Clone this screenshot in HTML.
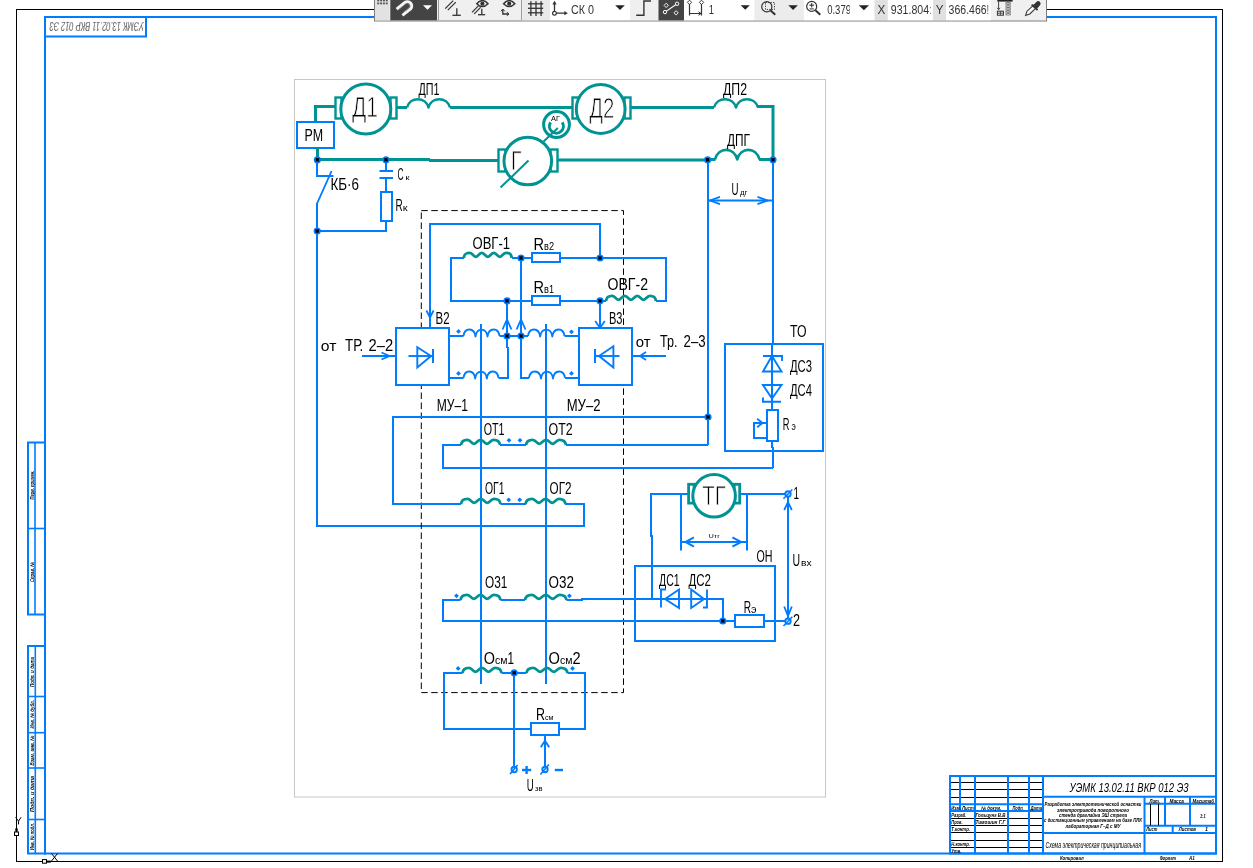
<!DOCTYPE html>
<html><head><meta charset="utf-8"><title>drawing</title>
<style>
html,body{margin:0;padding:0;background:#fff;}
body{width:1253px;height:868px;overflow:hidden;font-family:"Liberation Sans",sans-serif;}
svg{display:block;font-family:"Liberation Sans",sans-serif;will-change:transform;}
</style></head><body>
<svg width="1253" height="868" viewBox="0 0 1253 868">
<rect x="0" y="0" width="1253" height="868" fill="#fff"/>
<rect x="16.5" y="9.5" width="1206" height="852" fill="none" stroke="#000" stroke-width="1" />
<rect x="45" y="17" width="1171" height="836.5" fill="none" stroke="#007cff" stroke-width="2" />
<rect x="294.5" y="79.5" width="531" height="717.5" fill="none" stroke="#c8c8c8" stroke-width="1" />
<line x1="314" y1="106.5" x2="336" y2="106.5" stroke="#009393" stroke-width="3" />
<line x1="315.5" y1="105" x2="315.5" y2="122" stroke="#009393" stroke-width="3" />
<rect x="335.5" y="97.5" width="6" height="21" fill="none" stroke="#009393" stroke-width="2.4" />
<rect x="390.5" y="97.5" width="6" height="21" fill="none" stroke="#009393" stroke-width="2.4" />
<circle cx="365.8" cy="109" r="25" fill="#fff" stroke="#009393" stroke-width="3"/>
<text x="352" y="117.3" font-size="29.5" fill="#000" textLength="26" lengthAdjust="spacingAndGlyphs"    stroke="#fff" stroke-width="0.89">Д1</text>
<rect x="297" y="122" width="37" height="26" fill="#fff" stroke="#007cff" stroke-width="2" />
<text x="304.5" y="141.2" font-size="16" fill="#000" textLength="18.5" lengthAdjust="spacingAndGlyphs"    >РМ</text>
<line x1="317.5" y1="148" x2="317.5" y2="160" stroke="#009393" stroke-width="3" />
<line x1="397" y1="107.5" x2="407" y2="107.5" stroke="#009393" stroke-width="3" />
<path d="M407 107.5 C410.01 96.59 425.49 96.59 428.5 107.5 C431.51 96.59 446.99 96.59 450.0 107.5" fill="none" stroke="#009393" stroke-width="2.6" stroke-linejoin="round"/>
<line x1="450" y1="107.5" x2="572" y2="107.5" stroke="#009393" stroke-width="3" />
<text x="418.5" y="95" font-size="16" fill="#000" textLength="21.0" lengthAdjust="spacingAndGlyphs"    >ДП1</text>
<rect x="572.5" y="97.5" width="6" height="21" fill="none" stroke="#009393" stroke-width="2.4" />
<rect x="624.5" y="97.5" width="6" height="21" fill="none" stroke="#009393" stroke-width="2.4" />
<circle cx="600.7" cy="109" r="24.4" fill="#fff" stroke="#009393" stroke-width="3"/>
<text x="589.2" y="117.6" font-size="29.5" fill="#000" textLength="25.1" lengthAdjust="spacingAndGlyphs"    stroke="#fff" stroke-width="0.89">Д2</text>
<line x1="631" y1="107.5" x2="714" y2="107.5" stroke="#009393" stroke-width="3" />
<path d="M714 107.5 C717.08 96.59 732.92 96.59 736.0 107.5 C739.08 96.59 754.92 96.59 758.0 107.5" fill="none" stroke="#009393" stroke-width="2.6" stroke-linejoin="round"/>
<polyline points="757,106.5 773,106.5 773,160" fill="none" stroke="#009393" stroke-width="3" />
<text x="723" y="95" font-size="16" fill="#000" textLength="24" lengthAdjust="spacingAndGlyphs"    >ДП2</text>
<line x1="316" y1="159.5" x2="430" y2="159.5" stroke="#009393" stroke-width="3" />
<line x1="429" y1="160.5" x2="498" y2="160.5" stroke="#009393" stroke-width="3" />
<line x1="558" y1="160" x2="708" y2="160" stroke="#009393" stroke-width="3" />
<line x1="707" y1="159.5" x2="715.5" y2="159.5" stroke="#009393" stroke-width="3" />
<path d="M715 159.5 C718.12 146.73 734.13 146.73 737.25 159.5 C740.37 146.73 756.38 146.73 759.5 159.5" fill="none" stroke="#009393" stroke-width="2.6" stroke-linejoin="round"/>
<line x1="759" y1="159.5" x2="774" y2="159.5" stroke="#009393" stroke-width="3" />
<text x="727" y="146" font-size="16" fill="#000" textLength="23" lengthAdjust="spacingAndGlyphs"    >ДПГ</text>
<rect x="498.5" y="149.5" width="7" height="22" fill="none" stroke="#009393" stroke-width="2.4" />
<rect x="550.5" y="149.5" width="7" height="22" fill="none" stroke="#009393" stroke-width="2.4" />
<circle cx="527.8" cy="161" r="23.8" fill="#fff" stroke="#009393" stroke-width="3"/>
<line x1="500.5" y1="187.5" x2="528.5" y2="160.5" stroke="#009393" stroke-width="2" />
<text x="511" y="169.8" font-size="27" fill="#000" textLength="10.5" lengthAdjust="spacingAndGlyphs"    stroke="#fff" stroke-width="0.81">Г</text>
<circle cx="556.5" cy="124.5" r="12.9" fill="#fff" stroke="#009393" stroke-width="3"/>
<path d="M550.6 122.3 A7 7 0 1 0 562.2 122.3" fill="none" stroke="#009393" stroke-width="3" />
<line x1="543.6" y1="141.4" x2="557.8" y2="128.1" stroke="#009393" stroke-width="2" />
<text x="551" y="120.7" font-size="8" fill="#000" textLength="9" lengthAdjust="spacingAndGlyphs"    >АГ</text>
<polyline points="317,160 317,176 333.5,176" fill="none" stroke="#007cff" stroke-width="2" />
<line x1="331.6" y1="171" x2="317" y2="203.6" stroke="#007cff" stroke-width="1.8" />
<polyline points="317,203 317,526 584,526 584,504 565,504" fill="none" stroke="#007cff" stroke-width="2" />
<text x="330.5" y="190" font-size="16" fill="#000" textLength="28.5" lengthAdjust="spacingAndGlyphs"    >КБ·6</text>
<line x1="386" y1="160" x2="386" y2="171" stroke="#007cff" stroke-width="2" />
<line x1="379.5" y1="171" x2="393" y2="171" stroke="#007cff" stroke-width="2" />
<line x1="379.5" y1="178" x2="393" y2="178" stroke="#007cff" stroke-width="2" />
<line x1="386" y1="178" x2="386" y2="192" stroke="#007cff" stroke-width="2" />
<rect x="381" y="192" width="11" height="29" fill="#fff" stroke="#007cff" stroke-width="2" />
<polyline points="386,221 386,231 317,231" fill="none" stroke="#007cff" stroke-width="2" />
<text x="397.5" y="179.8" font-size="16" fill="#000" textLength="6.1" lengthAdjust="spacingAndGlyphs"    >С</text>
<text x="405.5" y="180" font-size="7" fill="#000" textLength="4.0" lengthAdjust="spacingAndGlyphs"    >к</text>
<text x="395.6" y="211.2" font-size="16" fill="#000" textLength="7.2" lengthAdjust="spacingAndGlyphs"    >R</text>
<text x="402.8" y="211.2" font-size="9.5" fill="#000" textLength="4.8" lengthAdjust="spacingAndGlyphs"    >к</text>
<line x1="708" y1="160" x2="708" y2="445" stroke="#007cff" stroke-width="2" />
<line x1="773" y1="160" x2="773" y2="345" stroke="#007cff" stroke-width="2" />
<line x1="772" y1="344" x2="772" y2="448" stroke="#007cff" stroke-width="2" />
<line x1="773" y1="447" x2="773" y2="468" stroke="#007cff" stroke-width="2" />
<line x1="708" y1="200.5" x2="773" y2="200.5" stroke="#007cff" stroke-width="2" />
<polyline points="720.0,196.9 710,200.5 720.0,204.1" fill="none" stroke="#007cff" stroke-width="1.8" />
<polyline points="757.5,204.1 767.5,200.5 757.5,196.9" fill="none" stroke="#007cff" stroke-width="1.8" />
<text x="731.5" y="194.7" font-size="16" fill="#000" textLength="7.0" lengthAdjust="spacingAndGlyphs"    >U</text>
<text x="740" y="194.7" font-size="7" fill="#000" textLength="7.5" lengthAdjust="spacingAndGlyphs"    >дг</text>
<rect x="421.3" y="210.6" width="202.2" height="482" fill="none" stroke="#000" stroke-width="1" stroke-dasharray="6.5 3.5"/>
<polyline points="430,328 430,224 600,224 600,258" fill="none" stroke="#007cff" stroke-width="2" />
<polyline points="426.4,310.5 430,317.5 433.6,310.5" fill="none" stroke="#007cff" stroke-width="1.8" />
<polyline points="464,258 451,258 451,301 532,301" fill="none" stroke="#007cff" stroke-width="2" />
<path d="M463.8 258 C464.28 253.58 466.5 252.8 469.8 252.8 C472.8 252.8 473.1 256.8 475.8 256.8 C478.5 256.8 478.8 252.8 481.8 252.8 C484.8 252.8 485.1 256.8 487.8 256.8 C490.5 256.8 490.8 252.8 493.8 252.8 C496.8 252.8 497.1 256.8 499.8 256.8 C502.5 256.8 502.8 252.8 505.8 252.8 C509.1 252.8 511.32 253.58 511.8 258" fill="none" stroke="#009393" stroke-width="2.8" stroke-linejoin="round"/>
<line x1="512" y1="258" x2="532" y2="258" stroke="#007cff" stroke-width="2" />
<rect x="532" y="253" width="28" height="9" fill="#fff" stroke="#007cff" stroke-width="2" />
<polyline points="560,258 666,258 666,301 656,301" fill="none" stroke="#007cff" stroke-width="2" />
<text x="472.5" y="248.7" font-size="16" fill="#000" textLength="37.5" lengthAdjust="spacingAndGlyphs"    >ОВГ-1</text>
<text x="533.5" y="249.6" font-size="16" fill="#000" textLength="10.5" lengthAdjust="spacingAndGlyphs"    >R</text>
<text x="544" y="249.6" font-size="10" fill="#000" textLength="10" lengthAdjust="spacingAndGlyphs"    >в2</text>
<rect x="532" y="296" width="28" height="9" fill="#fff" stroke="#007cff" stroke-width="2" />
<line x1="560" y1="301" x2="606" y2="301" stroke="#007cff" stroke-width="2" />
<path d="M606 301 C606.5 296.58 608.81 295.8 612.25 295.8 C615.38 295.8 615.69 299.8 618.5 299.8 C621.31 299.8 621.62 295.8 624.75 295.8 C627.88 295.8 628.19 299.8 631.0 299.8 C633.81 299.8 634.12 295.8 637.25 295.8 C640.38 295.8 640.69 299.8 643.5 299.8 C646.31 299.8 646.62 295.8 649.75 295.8 C653.19 295.8 655.5 296.58 656 301" fill="none" stroke="#009393" stroke-width="2.8" stroke-linejoin="round"/>
<text x="533.5" y="292.7" font-size="16" fill="#000" textLength="10.5" lengthAdjust="spacingAndGlyphs"    >R</text>
<text x="544" y="292.7" font-size="10" fill="#000" textLength="10" lengthAdjust="spacingAndGlyphs"    >в1</text>
<text x="607.5" y="290" font-size="16" fill="#000" textLength="40.5" lengthAdjust="spacingAndGlyphs"    >ОВГ-2</text>
<line x1="507" y1="301" x2="507" y2="348" stroke="#007cff" stroke-width="2" />
<line x1="508" y1="347" x2="508" y2="378" stroke="#007cff" stroke-width="2" />
<line x1="521" y1="258" x2="521" y2="378" stroke="#007cff" stroke-width="2" />
<polyline points="511.5,329.5 507,319.5 502.5,329.5" fill="none" stroke="#007cff" stroke-width="1.8" />
<polyline points="525.5,329.5 521,319.5 516.5,329.5" fill="none" stroke="#007cff" stroke-width="1.8" />
<line x1="600" y1="301" x2="600" y2="328" stroke="#007cff" stroke-width="2" />
<polyline points="595.2,321.0 600,328 604.8,321.0" fill="none" stroke="#007cff" stroke-width="1.8" />
<rect x="396" y="328" width="53" height="57" fill="#fff" stroke="#007cff" stroke-width="2" />
<text x="435.5" y="323.6" font-size="16" fill="#000" textLength="14.0" lengthAdjust="spacingAndGlyphs"    >В2</text>
<text x="320.8" y="351.2" font-size="14.5" fill="#000" textLength="15.6" lengthAdjust="spacingAndGlyphs"    >от</text>
<text x="345" y="351.2" font-size="16" fill="#000" textLength="18.2" lengthAdjust="spacingAndGlyphs"    >ТР.</text>
<text x="368.6" y="351.2" font-size="16" fill="#000" textLength="24.6" lengthAdjust="spacingAndGlyphs"    >2–2</text>
<line x1="362" y1="356" x2="397" y2="356" stroke="#007cff" stroke-width="2" />
<polyline points="381.5,359.5 389.5,356 381.5,352.5" fill="none" stroke="#007cff" stroke-width="1.8" />
<line x1="408.5" y1="356" x2="433.5" y2="356" stroke="#007cff" stroke-width="1.9" />
<path d="M417.3 347.3 L417.3 367.5 L431 356 Z" fill="none" stroke="#007cff" stroke-width="1.9" />
<line x1="433" y1="349" x2="433" y2="363" stroke="#007cff" stroke-width="2" />
<rect x="579" y="328" width="53" height="57" fill="#fff" stroke="#007cff" stroke-width="2" />
<text x="609" y="323.6" font-size="16" fill="#000" textLength="13.5" lengthAdjust="spacingAndGlyphs"    >В3</text>
<text x="635.8" y="346.8" font-size="14.5" fill="#000" textLength="14.8" lengthAdjust="spacingAndGlyphs"    >от</text>
<text x="660" y="346.8" font-size="16" fill="#000" textLength="17.5" lengthAdjust="spacingAndGlyphs"    >Тр.</text>
<text x="683.6" y="346.8" font-size="16" fill="#000" textLength="22.0" lengthAdjust="spacingAndGlyphs"    >2–3</text>
<line x1="632" y1="356" x2="666" y2="356" stroke="#007cff" stroke-width="2" />
<polyline points="646,352 640,356 646,360" fill="none" stroke="#007cff" stroke-width="1.8" />
<line x1="595" y1="356" x2="619.5" y2="356" stroke="#007cff" stroke-width="1.9" />
<path d="M613.4 346.3 L613.4 367.5 L599 356 Z" fill="none" stroke="#007cff" stroke-width="1.9" />
<line x1="595" y1="349" x2="595" y2="363" stroke="#007cff" stroke-width="2" />
<line x1="449" y1="336" x2="463.5" y2="336" stroke="#007cff" stroke-width="2" />
<path d="M463.5 336 C464.7 327.22 474.3 327.22 475.5 336.6 C476.7 327.22 486.3 327.22 487.5 336.6 C488.7 327.22 498.3 327.22 499.5 336" fill="none" stroke="#007cff" stroke-width="1.8" stroke-linejoin="round"/>
<line x1="499.5" y1="336" x2="528" y2="336" stroke="#007cff" stroke-width="2" />
<path d="M528 336 C529.22 327.22 538.95 327.22 540.17 336.6 C541.38 327.22 551.12 327.22 552.33 336.6 C553.55 327.22 563.28 327.22 564.5 336" fill="none" stroke="#007cff" stroke-width="1.8" stroke-linejoin="round"/>
<line x1="564.5" y1="336" x2="579" y2="336" stroke="#007cff" stroke-width="2" />
<rect x="456.8" y="329.7" width="3.4" height="3.4" fill="#007cff" transform="rotate(45 458.5 331.4)"/>
<rect x="569.8" y="330.1" width="3.4" height="3.4" fill="#007cff" transform="rotate(45 571.5 331.8)"/>
<line x1="449" y1="378" x2="463.5" y2="378" stroke="#007cff" stroke-width="2" />
<path d="M463.5 378 C464.67 369.22 474.0 369.22 475.17 378.6 C476.33 369.22 485.67 369.22 486.83 378.6 C488.0 369.22 497.33 369.22 498.5 378" fill="none" stroke="#007cff" stroke-width="1.8" stroke-linejoin="round"/>
<line x1="498.5" y1="378" x2="509" y2="378" stroke="#007cff" stroke-width="2" />
<line x1="520" y1="378" x2="529" y2="378" stroke="#007cff" stroke-width="2" />
<path d="M529 378 C530.2 369.22 539.8 369.22 541.0 378.6 C542.2 369.22 551.8 369.22 553.0 378.6 C554.2 369.22 563.8 369.22 565.0 378" fill="none" stroke="#007cff" stroke-width="1.8" stroke-linejoin="round"/>
<line x1="565" y1="378" x2="579" y2="378" stroke="#007cff" stroke-width="2" />
<rect x="456.8" y="371.7" width="3.4" height="3.4" fill="#007cff" transform="rotate(45 458.5 373.4)"/>
<rect x="569.8" y="371.7" width="3.4" height="3.4" fill="#007cff" transform="rotate(45 571.5 373.4)"/>
<line x1="481" y1="324" x2="481" y2="684" stroke="#007cff" stroke-width="2" />
<line x1="546" y1="324" x2="546" y2="684" stroke="#007cff" stroke-width="2" />
<text x="436.8" y="410.8" font-size="16" fill="#000" textLength="31.2" lengthAdjust="spacingAndGlyphs"    >МУ–1</text>
<text x="566.7" y="411" font-size="16" fill="#000" textLength="33.8" lengthAdjust="spacingAndGlyphs"    >МУ–2</text>
<polyline points="708,417 393,417 393,504 461,504" fill="none" stroke="#007cff" stroke-width="2" />
<polyline points="461,445 443,445 443,468 773,468" fill="none" stroke="#007cff" stroke-width="2" />
<path d="M461 445 C461.52 440.58 463.93 439.8 467.5 439.8 C470.75 439.8 471.07 443.8 474.0 443.8 C476.93 443.8 477.25 439.8 480.5 439.8 C483.75 439.8 484.07 443.8 487.0 443.8 C489.93 443.8 490.25 439.8 493.5 439.8 C497.07 439.8 499.48 440.58 500 445" fill="none" stroke="#009393" stroke-width="2.8" stroke-linejoin="round"/>
<line x1="500" y1="445" x2="526" y2="445" stroke="#007cff" stroke-width="2" />
<path d="M526 445 C526.53 440.58 529.0 439.8 532.67 439.8 C536.0 439.8 536.33 443.8 539.33 443.8 C542.33 443.8 542.67 439.8 546.0 439.8 C549.33 439.8 549.67 443.8 552.67 443.8 C555.67 443.8 556.0 439.8 559.33 439.8 C563.0 439.8 565.47 440.58 566 445" fill="none" stroke="#009393" stroke-width="2.8" stroke-linejoin="round"/>
<polyline points="566,445 708,445" fill="none" stroke="#007cff" stroke-width="2" />
<rect x="507.3" y="438.6" width="3.4" height="3.4" fill="#007cff" transform="rotate(45 509 440.3)"/>
<rect x="518.3" y="438.6" width="3.4" height="3.4" fill="#007cff" transform="rotate(45 520 440.3)"/>
<text x="483.7" y="435.4" font-size="16" fill="#000" textLength="20.8" lengthAdjust="spacingAndGlyphs"    >ОТ1</text>
<text x="548.5" y="435.4" font-size="16" fill="#000" textLength="24.1" lengthAdjust="spacingAndGlyphs"    >ОТ2</text>
<path d="M461 504 C461.53 499.58 463.96 498.8 467.58 498.8 C470.88 498.8 471.2 502.8 474.17 502.8 C477.13 502.8 477.46 498.8 480.75 498.8 C484.04 498.8 484.37 502.8 487.33 502.8 C490.3 502.8 490.62 498.8 493.92 498.8 C497.54 498.8 499.97 499.58 500.5 504" fill="none" stroke="#009393" stroke-width="2.8" stroke-linejoin="round"/>
<line x1="500.5" y1="504" x2="526" y2="504" stroke="#007cff" stroke-width="2" />
<path d="M525.5 504 C526.03 499.58 528.5 498.8 532.17 498.8 C535.5 498.8 535.83 502.8 538.83 502.8 C541.83 502.8 542.17 498.8 545.5 498.8 C548.83 498.8 549.17 502.8 552.17 502.8 C555.17 502.8 555.5 498.8 558.83 498.8 C562.5 498.8 564.97 499.58 565.5 504" fill="none" stroke="#009393" stroke-width="2.8" stroke-linejoin="round"/>
<rect x="507.0" y="498.1" width="3.4" height="3.4" fill="#007cff" transform="rotate(45 508.7 499.8)"/>
<rect x="518.0" y="498.1" width="3.4" height="3.4" fill="#007cff" transform="rotate(45 519.7 499.8)"/>
<text x="485" y="494" font-size="16" fill="#000" textLength="19.5" lengthAdjust="spacingAndGlyphs"    >ОГ1</text>
<text x="549.6" y="494" font-size="16" fill="#000" textLength="21.9" lengthAdjust="spacingAndGlyphs"    >ОГ2</text>
<polyline points="460.5,600 443,600 443,621 723,621" fill="none" stroke="#007cff" stroke-width="2" />
<path d="M460.5 600 C461.03 595.58 463.5 594.8 467.17 594.8 C470.5 594.8 470.83 598.8 473.83 598.8 C476.83 598.8 477.17 594.8 480.5 594.8 C483.83 594.8 484.17 598.8 487.17 598.8 C490.17 598.8 490.5 594.8 493.83 594.8 C497.5 594.8 499.97 595.58 500.5 600" fill="none" stroke="#009393" stroke-width="2.8" stroke-linejoin="round"/>
<line x1="500.5" y1="600" x2="525" y2="600" stroke="#007cff" stroke-width="2" />
<path d="M525 600 C525.55 595.58 528.11 594.8 531.92 594.8 C535.38 594.8 535.72 598.8 538.83 598.8 C541.95 598.8 542.29 594.8 545.75 594.8 C549.21 594.8 549.55 598.8 552.67 598.8 C555.78 598.8 556.12 594.8 559.58 594.8 C563.39 594.8 565.95 595.58 566.5 600" fill="none" stroke="#009393" stroke-width="2.8" stroke-linejoin="round"/>
<polyline points="566.5,600 582,600 582,599 723,599 723,621" fill="none" stroke="#007cff" stroke-width="2" />
<rect x="454.8" y="594.0999999999999" width="3.4" height="3.4" fill="#007cff" transform="rotate(45 456.5 595.8)"/>
<rect x="567.6999999999999" y="594.0999999999999" width="3.4" height="3.4" fill="#007cff" transform="rotate(45 569.4 595.8)"/>
<text x="485" y="587.9" font-size="16" fill="#000" textLength="22.3" lengthAdjust="spacingAndGlyphs"    >О31</text>
<text x="548.6" y="587.9" font-size="16" fill="#000" textLength="25.4" lengthAdjust="spacingAndGlyphs"    >О32</text>
<polyline points="462.5,673 444,673 444,729 531,729" fill="none" stroke="#007cff" stroke-width="2" />
<path d="M462.5 673 C463.02 668.58 465.43 667.8 469.0 667.8 C472.25 667.8 472.57 671.8 475.5 671.8 C478.43 671.8 478.75 667.8 482.0 667.8 C485.25 667.8 485.57 671.8 488.5 671.8 C491.43 671.8 491.75 667.8 495.0 667.8 C498.57 667.8 500.98 668.58 501.5 673" fill="none" stroke="#009393" stroke-width="2.8" stroke-linejoin="round"/>
<line x1="501.5" y1="673" x2="526.5" y2="673" stroke="#007cff" stroke-width="2" />
<path d="M526.5 673 C527.05 668.58 529.58 667.8 533.33 667.8 C536.75 667.8 537.09 671.8 540.17 671.8 C543.24 671.8 543.58 667.8 547.0 667.8 C550.42 667.8 550.76 671.8 553.83 671.8 C556.91 671.8 557.25 667.8 560.67 667.8 C564.43 667.8 566.95 668.58 567.5 673" fill="none" stroke="#009393" stroke-width="2.8" stroke-linejoin="round"/>
<polyline points="567.5,673 585,673 585,729 559,729" fill="none" stroke="#007cff" stroke-width="2" />
<rect x="456.40000000000003" y="666.6999999999999" width="3.4" height="3.4" fill="#007cff" transform="rotate(45 458.1 668.4)"/>
<rect x="570.8" y="666.6999999999999" width="3.4" height="3.4" fill="#007cff" transform="rotate(45 572.5 668.4)"/>
<text x="483.8" y="664.4" font-size="16" fill="#000" textLength="11.2" lengthAdjust="spacingAndGlyphs"    >О</text>
<text x="495" y="664.4" font-size="11.5" fill="#000" textLength="12.5" lengthAdjust="spacingAndGlyphs"    >см</text>
<text x="507.5" y="664.4" font-size="16" fill="#000" textLength="6.5" lengthAdjust="spacingAndGlyphs"    >1</text>
<text x="548.6" y="664.4" font-size="16" fill="#000" textLength="11.4" lengthAdjust="spacingAndGlyphs"    >О</text>
<text x="560" y="664.4" font-size="11.5" fill="#000" textLength="12.5" lengthAdjust="spacingAndGlyphs"    >см</text>
<text x="572.5" y="664.4" font-size="16" fill="#000" textLength="8.1" lengthAdjust="spacingAndGlyphs"    >2</text>
<line x1="514" y1="673" x2="514" y2="766" stroke="#007cff" stroke-width="2" />
<rect x="531" y="723" width="28" height="12" fill="#fff" stroke="#007cff" stroke-width="2" />
<line x1="545" y1="735" x2="545" y2="766" stroke="#007cff" stroke-width="2" />
<polyline points="549.2,747.2 545,740.7 540.8,747.2" fill="none" stroke="#007cff" stroke-width="1.8" />
<text x="536" y="720.4" font-size="16" fill="#000" textLength="9" lengthAdjust="spacingAndGlyphs"    >R</text>
<text x="545" y="720.4" font-size="8" fill="#000" textLength="8.5" lengthAdjust="spacingAndGlyphs"    >см</text>
<circle cx="514.2" cy="769.5" r="2.7" fill="#fff" stroke="#007cff" stroke-width="1.9"/>
<line x1="510" y1="774" x2="517.6" y2="765" stroke="#007cff" stroke-width="1.6" />
<circle cx="545" cy="769.5" r="2.7" fill="#fff" stroke="#007cff" stroke-width="1.9"/>
<line x1="540.4" y1="774.6" x2="548.9" y2="764.5" stroke="#007cff" stroke-width="1.6" />
<line x1="522" y1="770" x2="531.2" y2="770" stroke="#007cff" stroke-width="2.4" />
<line x1="526.6" y1="766" x2="526.6" y2="774" stroke="#007cff" stroke-width="2.4" />
<line x1="554.8" y1="770" x2="563" y2="770" stroke="#007cff" stroke-width="2.4" />
<text x="526.7" y="791" font-size="16" fill="#000" textLength="7.0" lengthAdjust="spacingAndGlyphs"    >U</text>
<text x="535" y="791" font-size="7" fill="#000" textLength="7.5" lengthAdjust="spacingAndGlyphs"    >зв</text>
<rect x="725" y="344" width="98" height="107" fill="none" stroke="#007cff" stroke-width="2" />
<text x="790" y="337" font-size="16" fill="#000" textLength="16.5" lengthAdjust="spacingAndGlyphs"    >ТО</text>
<path d="M772 356 L763 371.5 L781.5 371.5 Z" fill="none" stroke="#007cff" stroke-width="1.9" />
<polyline points="763,356 782,356 782,361" fill="none" stroke="#007cff" stroke-width="1.9" />
<path d="M763 385 L781.5 385 L772 398.5 Z" fill="none" stroke="#007cff" stroke-width="1.9" />
<polyline points="763,397.5 763,401.7 781,401.7" fill="none" stroke="#007cff" stroke-width="1.9" />
<text x="790" y="372" font-size="16" fill="#000" textLength="22" lengthAdjust="spacingAndGlyphs"    >ДС3</text>
<text x="790" y="396.1" font-size="16" fill="#000" textLength="22" lengthAdjust="spacingAndGlyphs"    >ДС4</text>
<rect x="767" y="410" width="11" height="31" fill="#fff" stroke="#007cff" stroke-width="2" />
<polyline points="767,423 754,423 754,438 767,438" fill="none" stroke="#007cff" stroke-width="2" />
<polyline points="757.1,427.3 762.6,423 757.1,418.7" fill="none" stroke="#007cff" stroke-width="1.8" />
<text x="782.8" y="430" font-size="16" fill="#000" textLength="6.7" lengthAdjust="spacingAndGlyphs"    >R</text>
<text x="791.5" y="430" font-size="10" fill="#000" textLength="4.3" lengthAdjust="spacingAndGlyphs"    >э</text>
<polyline points="689,494 651,494 651,536 652,536 652,599" fill="none" stroke="#007cff" stroke-width="2" />
<rect x="688.6" y="484.3" width="5.5" height="18.8" fill="none" stroke="#009393" stroke-width="2.8" />
<rect x="734.2" y="484.3" width="5.5" height="18.8" fill="none" stroke="#009393" stroke-width="2.8" />
<circle cx="714.1" cy="495.8" r="21.3" fill="#fff" stroke="#009393" stroke-width="3"/>
<text x="702.3" y="505" font-size="27.5" fill="#000" textLength="23.5" lengthAdjust="spacingAndGlyphs"    stroke="#fff" stroke-width="0.82">ТГ</text>
<line x1="740" y1="494" x2="785" y2="494" stroke="#007cff" stroke-width="2" />
<line x1="681" y1="494" x2="681" y2="550.5" stroke="#007cff" stroke-width="2" />
<line x1="747" y1="494" x2="747" y2="550.5" stroke="#007cff" stroke-width="2" />
<line x1="681" y1="542" x2="747" y2="542" stroke="#007cff" stroke-width="2" />
<polyline points="693.9,537.4 685.5,542 693.9,546.6" fill="none" stroke="#007cff" stroke-width="2" />
<polyline points="732.4,546.6 741.2,542 732.4,537.4" fill="none" stroke="#007cff" stroke-width="2" />
<text x="708.6" y="538" font-size="6" fill="#000" textLength="11.4" lengthAdjust="spacingAndGlyphs"    >Uтг</text>
<circle cx="788" cy="494" r="2.7" fill="#fff" stroke="#007cff" stroke-width="1.9"/>
<line x1="783.5" y1="498.8" x2="792.3" y2="489.5" stroke="#007cff" stroke-width="1.6" />
<circle cx="788" cy="621.2" r="2.7" fill="#fff" stroke="#007cff" stroke-width="1.9"/>
<line x1="783.5" y1="626" x2="792.3" y2="616.7" stroke="#007cff" stroke-width="1.6" />
<text x="793.5" y="499.1" font-size="16" fill="#000" textLength="5.5" lengthAdjust="spacingAndGlyphs"    >1</text>
<text x="793" y="625.8" font-size="16" fill="#000" textLength="7" lengthAdjust="spacingAndGlyphs"    >2</text>
<line x1="788" y1="497" x2="788" y2="618" stroke="#007cff" stroke-width="2" />
<polyline points="791.8,510.0 788,502 784.2,510.0" fill="none" stroke="#007cff" stroke-width="1.8" />
<polyline points="784.2,606.5 788,616 791.8,606.5" fill="none" stroke="#007cff" stroke-width="1.8" />
<text x="792.4" y="565.5" font-size="16" fill="#000" textLength="7.6" lengthAdjust="spacingAndGlyphs"    >U</text>
<text x="801" y="565.5" font-size="9" fill="#000" textLength="10.5" lengthAdjust="spacingAndGlyphs"    >вх</text>
<rect x="635" y="566" width="140" height="75" fill="none" stroke="#007cff" stroke-width="2" />
<text x="756.5" y="561.7" font-size="16" fill="#000" textLength="16.0" lengthAdjust="spacingAndGlyphs"    >ОН</text>
<text x="659" y="586.3" font-size="16" fill="#000" textLength="20.6" lengthAdjust="spacingAndGlyphs"    >ДС1</text>
<text x="688.5" y="586.3" font-size="16" fill="#000" textLength="22.5" lengthAdjust="spacingAndGlyphs"    >ДС2</text>
<polyline points="666,589.5 661,589.5 661,607.5" fill="none" stroke="#007cff" stroke-width="1.9" />
<path d="M665 599 L679 589.5 L679 608 Z" fill="none" stroke="#007cff" stroke-width="1.9" />
<path d="M691.2 589.5 L691.2 608 L704 599 Z" fill="none" stroke="#007cff" stroke-width="1.9" />
<polyline points="707,589.5 707,607.5 703,607.5" fill="none" stroke="#007cff" stroke-width="1.9" />
<line x1="723" y1="621" x2="735" y2="621" stroke="#007cff" stroke-width="2" />
<rect x="735" y="615" width="29" height="12" fill="#fff" stroke="#007cff" stroke-width="2" />
<line x1="764" y1="621" x2="785" y2="621" stroke="#007cff" stroke-width="2" />
<text x="743.7" y="613.1" font-size="16" fill="#000" textLength="7.3" lengthAdjust="spacingAndGlyphs"    >R</text>
<text x="751" y="613.1" font-size="10" fill="#000" textLength="5.5" lengthAdjust="spacingAndGlyphs"    >э</text>
<circle cx="317.4" cy="159.8" r="3.6" fill="#007cff"/>
<rect x="315.7" y="158.10000000000002" width="3.4" height="3.4" fill="#000"/>
<circle cx="386" cy="159.8" r="3.6" fill="#007cff"/>
<rect x="384.3" y="158.10000000000002" width="3.4" height="3.4" fill="#000"/>
<circle cx="317.2" cy="231" r="3.6" fill="#007cff"/>
<rect x="315.5" y="229.3" width="3.4" height="3.4" fill="#000"/>
<circle cx="707.6" cy="159.8" r="3.6" fill="#007cff"/>
<rect x="705.9" y="158.10000000000002" width="3.4" height="3.4" fill="#000"/>
<circle cx="773" cy="159.8" r="3.6" fill="#007cff"/>
<rect x="771.3" y="158.10000000000002" width="3.4" height="3.4" fill="#000"/>
<circle cx="521" cy="258" r="3.6" fill="#007cff"/>
<rect x="519.3" y="256.3" width="3.4" height="3.4" fill="#000"/>
<circle cx="600" cy="258" r="3.6" fill="#007cff"/>
<rect x="598.3" y="256.3" width="3.4" height="3.4" fill="#000"/>
<circle cx="507" cy="300.8" r="3.6" fill="#007cff"/>
<rect x="505.3" y="299.1" width="3.4" height="3.4" fill="#000"/>
<circle cx="600" cy="300.8" r="3.6" fill="#007cff"/>
<rect x="598.3" y="299.1" width="3.4" height="3.4" fill="#000"/>
<circle cx="507" cy="336" r="3.6" fill="#007cff"/>
<rect x="505.3" y="334.3" width="3.4" height="3.4" fill="#000"/>
<circle cx="521" cy="336" r="3.6" fill="#007cff"/>
<rect x="519.3" y="334.3" width="3.4" height="3.4" fill="#000"/>
<circle cx="708" cy="417" r="3.6" fill="#007cff"/>
<rect x="706.3" y="415.3" width="3.4" height="3.4" fill="#000"/>
<circle cx="514.2" cy="672.8" r="3.6" fill="#007cff"/>
<rect x="512.5" y="671.0999999999999" width="3.4" height="3.4" fill="#000"/>
<circle cx="722.8" cy="621" r="3.6" fill="#007cff"/>
<rect x="721.0999999999999" y="619.3" width="3.4" height="3.4" fill="#000"/>
<rect x="45" y="17" width="101" height="19.5" fill="none" stroke="#007cff" stroke-width="2" />
<g transform="translate(144,36) rotate(180)"><text x="0" y="14.3" font-size="12.4" font-style="italic" textLength="94.5" lengthAdjust="spacingAndGlyphs" fill="#000" stroke="#fff" stroke-width="0.3">УЭМК 13.02.11 ВКР 012 Э3</text></g>
<rect x="28" y="442.5" width="17" height="172" fill="none" stroke="#007cff" stroke-width="2" />
<line x1="35" y1="442.5" x2="35" y2="614.5" stroke="#007cff" stroke-width="1.6" />
<line x1="28" y1="528.5" x2="45" y2="528.5" stroke="#007cff" stroke-width="1.6" />
<rect x="28" y="646" width="17" height="207.5" fill="none" stroke="#007cff" stroke-width="2" />
<line x1="35.3" y1="646" x2="35.3" y2="853.5" stroke="#007cff" stroke-width="1.6" />
<line x1="28" y1="696.5" x2="45" y2="696.5" stroke="#007cff" stroke-width="1.6" />
<line x1="28" y1="732.7" x2="45" y2="732.7" stroke="#007cff" stroke-width="1.6" />
<line x1="28" y1="768" x2="45" y2="768" stroke="#007cff" stroke-width="1.6" />
<line x1="28" y1="819.5" x2="45" y2="819.5" stroke="#007cff" stroke-width="1.6" />
<text transform="translate(33.7,499.5) rotate(-90)" font-size="5.5" font-style="italic" textLength="29.0" lengthAdjust="spacingAndGlyphs" fill="#000" font-weight="bold">Перв. примен.</text>
<text transform="translate(33.7,582) rotate(-90)" font-size="5.5" font-style="italic" textLength="20" lengthAdjust="spacingAndGlyphs" fill="#000" font-weight="bold">Справ. №</text>
<text transform="translate(33.9,687) rotate(-90)" font-size="5.5" font-style="italic" textLength="30" lengthAdjust="spacingAndGlyphs" fill="#000" font-weight="bold">Подп. и дата</text>
<text transform="translate(33.9,728.5) rotate(-90)" font-size="5.5" font-style="italic" textLength="28.5" lengthAdjust="spacingAndGlyphs" fill="#000" font-weight="bold">Инв. № дубл.</text>
<text transform="translate(33.9,765.5) rotate(-90)" font-size="5.5" font-style="italic" textLength="30.0" lengthAdjust="spacingAndGlyphs" fill="#000" font-weight="bold">Взам. инв. №</text>
<text transform="translate(33.9,812) rotate(-90)" font-size="5.5" font-style="italic" textLength="36" lengthAdjust="spacingAndGlyphs" fill="#000" font-weight="bold">Подп. и дата</text>
<text transform="translate(33.9,850) rotate(-90)" font-size="5.5" font-style="italic" textLength="27" lengthAdjust="spacingAndGlyphs" fill="#000" font-weight="bold">Инв. № подл.</text>
<rect x="15.3" y="828.3" width="2.4" height="3.4" fill="#000"/>
<rect x="14.5" y="832" width="4" height="3.5" fill="#fff" stroke="#000" stroke-width="1" />
<rect x="42.5" y="859.6" width="4" height="3.6" fill="#fff" stroke="#000" stroke-width="1" />
<rect x="47" y="860.6" width="3.8" height="2" fill="#000"/>
<polyline points="15.6,817.2 18.5,821.2 21.1,817.2" fill="none" stroke="#000" stroke-width="1" />
<line x1="18.5" y1="821.2" x2="18.5" y2="824.4" stroke="#000" stroke-width="1" />
<line x1="51.5" y1="853.5" x2="57.5" y2="861" stroke="#000" stroke-width="1" />
<line x1="57.5" y1="853.5" x2="51.5" y2="861" stroke="#000" stroke-width="1" />
<rect x="950" y="776" width="266" height="77.5" fill="none" stroke="#007cff" stroke-width="2" />
<line x1="951" y1="782.5" x2="1043" y2="782.5" stroke="#000" stroke-width="1" />
<line x1="951" y1="789.5" x2="1043" y2="789.5" stroke="#000" stroke-width="1" />
<line x1="951" y1="797.5" x2="1043" y2="797.5" stroke="#000" stroke-width="1" />
<line x1="951" y1="818.5" x2="1043" y2="818.5" stroke="#000" stroke-width="1" />
<line x1="951" y1="825.5" x2="1043" y2="825.5" stroke="#000" stroke-width="1" />
<line x1="951" y1="832.5" x2="1043" y2="832.5" stroke="#000" stroke-width="1" />
<line x1="951" y1="840.5" x2="1043" y2="840.5" stroke="#000" stroke-width="1" />
<line x1="951" y1="847.5" x2="1043" y2="847.5" stroke="#000" stroke-width="1" />
<line x1="950" y1="804.2" x2="1043" y2="804.2" stroke="#007cff" stroke-width="2" />
<line x1="950" y1="811.1" x2="1043" y2="811.1" stroke="#007cff" stroke-width="2" />
<line x1="960" y1="776" x2="960" y2="811.1" stroke="#007cff" stroke-width="2" />
<line x1="975" y1="776" x2="975" y2="853.5" stroke="#007cff" stroke-width="2" />
<line x1="1008" y1="776" x2="1008" y2="853.5" stroke="#007cff" stroke-width="2" />
<line x1="1029" y1="776" x2="1029" y2="853.5" stroke="#007cff" stroke-width="2" />
<line x1="1043" y1="776" x2="1043" y2="853.5" stroke="#007cff" stroke-width="2" />
<line x1="1043" y1="796.8" x2="1216" y2="796.8" stroke="#007cff" stroke-width="2" />
<line x1="1043" y1="833" x2="1216" y2="833" stroke="#007cff" stroke-width="2" />
<line x1="1144.5" y1="796.8" x2="1144.5" y2="853.5" stroke="#007cff" stroke-width="2" />
<line x1="1144.5" y1="803.8" x2="1216" y2="803.8" stroke="#007cff" stroke-width="2" />
<line x1="1144.5" y1="825.7" x2="1216" y2="825.7" stroke="#007cff" stroke-width="2" />
<line x1="1165" y1="796.5" x2="1165" y2="825.7" stroke="#007cff" stroke-width="2" />
<line x1="1190" y1="796.5" x2="1190" y2="825.7" stroke="#007cff" stroke-width="2" />
<line x1="1172.7" y1="825.7" x2="1172.7" y2="833" stroke="#007cff" stroke-width="2" />
<line x1="1150.5" y1="804" x2="1150.5" y2="825.5" stroke="#000" stroke-width="1" />
<line x1="1158.5" y1="804" x2="1158.5" y2="825.5" stroke="#000" stroke-width="1" />
<text x="1069.5" y="792" font-size="13.5" fill="#000" textLength="119.1" lengthAdjust="spacingAndGlyphs" font-style="italic"   >УЭМК 13.02.11 ВКР 012 Э3</text>
<text x="1044.5" y="806.2" font-size="5.6" fill="#000" textLength="97.0" lengthAdjust="spacingAndGlyphs" font-style="italic"  font-weight="bold" >Разработка электротехнической оснастки</text>
<text x="1057.0" y="811.6" font-size="5.6" fill="#000" textLength="72.0" lengthAdjust="spacingAndGlyphs" font-style="italic"  font-weight="bold" >электропривода поворотного</text>
<text x="1059.0" y="817.0" font-size="5.6" fill="#000" textLength="68.0" lengthAdjust="spacingAndGlyphs" font-style="italic"  font-weight="bold" >стенда драглайна ЭШ стрела</text>
<text x="1044.0" y="822.4000000000001" font-size="5.6" fill="#000" textLength="98.0" lengthAdjust="spacingAndGlyphs" font-style="italic"  font-weight="bold" >с дистанционным управлением на базе ПЛК</text>
<text x="1065.5" y="827.8000000000001" font-size="5.6" fill="#000" textLength="55.0" lengthAdjust="spacingAndGlyphs" font-style="italic"  font-weight="bold" >лабораторная Г–Д с МУ</text>
<text x="1045.5" y="848" font-size="9.5" fill="#000" textLength="95.5" lengthAdjust="spacingAndGlyphs" font-style="italic"   >Схема электрическая принципиальная</text>
<text x="1060" y="860.4" font-size="5.5" fill="#000" textLength="23.6" lengthAdjust="spacingAndGlyphs" font-style="italic"  font-weight="bold" >Копировал</text>
<text x="1159.8" y="860.4" font-size="5.5" fill="#000" textLength="16.2" lengthAdjust="spacingAndGlyphs" font-style="italic"  font-weight="bold" >Формат</text>
<text x="1189" y="860.4" font-size="5.5" fill="#000" textLength="5.8" lengthAdjust="spacingAndGlyphs" font-style="italic"  font-weight="bold" >А1</text>
<text x="1149.5" y="802.6" font-size="5.2" fill="#000" textLength="10.5" lengthAdjust="spacingAndGlyphs" font-style="italic"  font-weight="bold" >Лит.</text>
<text x="1169.5" y="802.6" font-size="5.2" fill="#000" textLength="14.5" lengthAdjust="spacingAndGlyphs" font-style="italic"  font-weight="bold" >Масса</text>
<text x="1192.5" y="802.6" font-size="5.2" fill="#000" textLength="21.5" lengthAdjust="spacingAndGlyphs" font-style="italic"  font-weight="bold" >Масштаб</text>
<text x="1200" y="817.5" font-size="5.5" fill="#000" textLength="5.5" lengthAdjust="spacingAndGlyphs" font-style="italic"  font-weight="bold" >1:1</text>
<text x="1146.3" y="831.3" font-size="5.2" fill="#000" textLength="11.2" lengthAdjust="spacingAndGlyphs" font-style="italic"  font-weight="bold" >Лист</text>
<text x="1178.8" y="831.3" font-size="5.2" fill="#000" textLength="17.2" lengthAdjust="spacingAndGlyphs" font-style="italic"  font-weight="bold" >Листов</text>
<text x="1205" y="831.3" font-size="5.2" fill="#000" textLength="3" lengthAdjust="spacingAndGlyphs" font-style="italic"  font-weight="bold" >1</text>
<text x="951.3" y="810.2" font-size="5.2" fill="#000" textLength="22.4" lengthAdjust="spacingAndGlyphs" font-style="italic"  font-weight="bold" >Изм. Лист</text>
<text x="981.3" y="810.2" font-size="5.2" fill="#000" textLength="20.0" lengthAdjust="spacingAndGlyphs" font-style="italic"  font-weight="bold" >№ докум.</text>
<text x="1012.5" y="810.2" font-size="5.2" fill="#000" textLength="11.2" lengthAdjust="spacingAndGlyphs" font-style="italic"  font-weight="bold" >Подп.</text>
<text x="1030.5" y="810.2" font-size="5.2" fill="#000" textLength="11.5" lengthAdjust="spacingAndGlyphs" font-style="italic"  font-weight="bold" >Дата</text>
<text x="951.3" y="817.2" font-size="5.2" fill="#000" textLength="15.0" lengthAdjust="spacingAndGlyphs" font-style="italic"  font-weight="bold" >Разраб.</text>
<text x="975.5" y="817.2" font-size="5.2" fill="#000" textLength="30.0" lengthAdjust="spacingAndGlyphs" font-style="italic"  font-weight="bold" >Гольцунг В.В</text>
<text x="951.3" y="824.3" font-size="5.2" fill="#000" textLength="11.2" lengthAdjust="spacingAndGlyphs" font-style="italic"  font-weight="bold" >Пров.</text>
<text x="975.5" y="824.3" font-size="5.2" fill="#000" textLength="30.0" lengthAdjust="spacingAndGlyphs" font-style="italic"  font-weight="bold" >Тимошин Г.Г</text>
<text x="951.3" y="831.4" font-size="5.2" fill="#000" textLength="18.7" lengthAdjust="spacingAndGlyphs" font-style="italic"  font-weight="bold" >Т.контр.</text>
<text x="951.3" y="845.5" font-size="5.2" fill="#000" textLength="18.7" lengthAdjust="spacingAndGlyphs" font-style="italic"  font-weight="bold" >Н.контр.</text>
<text x="951.3" y="852.5" font-size="5.2" fill="#000" textLength="10.0" lengthAdjust="spacingAndGlyphs" font-style="italic"  font-weight="bold" >Утв.</text>
<rect x="374.5" y="-1" width="672.0" height="22" fill="#f0f0f0" stroke="#7e7e7e" stroke-width="1"/>
<rect x="375" y="0" width="14.5" height="20.3" fill="#e2e2e2"/>
<rect x="377.2" y="-0.4" width="2" height="1.8" fill="#5a5a5a"/>
<rect x="377.2" y="2.5" width="2" height="1.8" fill="#5a5a5a"/>
<rect x="380.05" y="-0.4" width="2" height="1.8" fill="#5a5a5a"/>
<rect x="380.05" y="2.5" width="2" height="1.8" fill="#5a5a5a"/>
<rect x="382.9" y="-0.4" width="2" height="1.8" fill="#5a5a5a"/>
<rect x="382.9" y="2.5" width="2" height="1.8" fill="#5a5a5a"/>
<rect x="385.75" y="-0.4" width="2" height="1.8" fill="#5a5a5a"/>
<rect x="385.75" y="2.5" width="2" height="1.8" fill="#5a5a5a"/>
<rect x="390.3" y="0" width="46.69999999999999" height="20.3" fill="#444"/>
<path d="M396.6 9.2 L404.6 2.6 A4.4 4.4 0 0 1 410.6 9 L402.4 15.4" fill="none" stroke="#f4f4f4" stroke-width="2.9" />
<path d="M398.6 9.6 L405.4 4 A2.6 2.6 0 0 1 409 7.8 L402.6 13" fill="none" stroke="#9a9a9a" stroke-width="0.7" />
<path d="M423 5.2 L432 5.2 L427.5 9.7 Z" fill="#fff"/>
<line x1="438.5" y1="0" x2="438.5" y2="20" stroke="#9a9a9a" stroke-width="1" />
<line x1="445.2" y1="8.6" x2="453.2" y2="0.6" stroke="#333" stroke-width="1.2" />
<line x1="447.8" y1="10.2" x2="455.8" y2="2.2" stroke="#333" stroke-width="1.2" />
<line x1="456.8" y1="8.3" x2="456.8" y2="15.3" stroke="#333" stroke-width="1.3" />
<line x1="452.4" y1="15.3" x2="460.8" y2="15.3" stroke="#333" stroke-width="1.3" />
<line x1="472" y1="12.3" x2="478.6" y2="5.7" stroke="#333" stroke-width="1.2" />
<line x1="474.2" y1="13.8" x2="480.6" y2="7.4" stroke="#333" stroke-width="1.2" />
<path d="M476.79999999999995 3.7 Q482.4 -2.5 488.0 3.7 Q482.4 9.3 476.79999999999995 3.7 Z" fill="#f7f7f7" stroke="#333" stroke-width="1.5" />
<circle cx="482.4" cy="3.7" r="2.1" fill="#333"/>
<line x1="481.8" y1="8.8" x2="481.8" y2="14.7" stroke="#333" stroke-width="1.3" />
<line x1="478" y1="14.7" x2="485.2" y2="14.7" stroke="#333" stroke-width="1.3" />
<path d="M503.59999999999997 3.7 Q509.2 -2.5 514.8 3.7 Q509.2 9.3 503.59999999999997 3.7 Z" fill="#f7f7f7" stroke="#333" stroke-width="1.5" />
<circle cx="509.2" cy="3.7" r="2.1" fill="#333"/>
<polyline points="502.8,9.4 502.8,14 508.8,14" fill="none" stroke="#333" stroke-width="1.3" />
<polyline points="500.9,11.3 502.8,9 504.7,11.3" fill="none" stroke="#333" stroke-width="1" />
<polyline points="506.8,12.2 509,14 506.8,15.8" fill="none" stroke="#333" stroke-width="1" />
<line x1="521.5" y1="0" x2="521.5" y2="20" stroke="#9a9a9a" stroke-width="1" />
<rect x="522.5" y="0" width="27.5" height="20.3" fill="#e9e9e9"/>
<rect x="550" y="0" width="80" height="20.3" fill="#fff"/>
<line x1="530.9" y1="1.3" x2="530.9" y2="16" stroke="#333" stroke-width="1.3" />
<line x1="528" y1="3.8" x2="543.2" y2="3.8" stroke="#333" stroke-width="1.3" />
<line x1="536.0" y1="1.3" x2="536.0" y2="16" stroke="#333" stroke-width="1.3" />
<line x1="528" y1="8.3" x2="543.2" y2="8.3" stroke="#333" stroke-width="1.3" />
<line x1="541.1" y1="1.3" x2="541.1" y2="16" stroke="#333" stroke-width="1.3" />
<line x1="528" y1="12.8" x2="543.2" y2="12.8" stroke="#333" stroke-width="1.3" />
<polyline points="554.5,2.5 554.5,13.2 565.5,13.2" fill="none" stroke="#333" stroke-width="1.3" />
<circle cx="554.5" cy="13.2" r="1.9" fill="#fff" stroke="#333" stroke-width="1.2"/>
<path d="M552.4 4.6 L554.5 0.8 L556.6 4.6 Z" fill="#333"/>
<path d="M564.4 11.1 L567.8 13.2 L564.4 15.3 Z" fill="#333"/>
<text x="571" y="13.5" font-size="13.4" fill="#333" textLength="23" lengthAdjust="spacingAndGlyphs">СК 0</text>
<path d="M615.2 5.2 L624.8 5.2 L620.0 9.999999999999954 Z" fill="#222"/>
<rect x="630" y="0" width="28" height="20.3" fill="#efefef"/>
<polyline points="636.2,15.3 643.9,15.3 643.9,1 651,1" fill="none" stroke="#333" stroke-width="1.4" />
<rect x="658.5" y="0" width="25.5" height="20.3" fill="#444"/>
<line x1="665" y1="12.1" x2="677.1" y2="3.8" stroke="#fff" stroke-width="1.1" />
<circle cx="665" cy="12.1" r="1.7" fill="#444" stroke="#fff" stroke-width="1"/>
<circle cx="677.1" cy="3.8" r="1.7" fill="#444" stroke="#fff" stroke-width="1"/>
<rect x="664.7" y="3.9" width="3" height="3" fill="#444" stroke="#fff" stroke-width="0.9" transform="rotate(45 666.2 5.4)"/>
<rect x="674.6" y="11.3" width="3" height="3" fill="#444" stroke="#fff" stroke-width="0.9" transform="rotate(45 676.1 12.8)"/>
<rect x="684" y="0" width="70.5" height="20.3" fill="#fff"/>
<line x1="689.5" y1="4" x2="689.5" y2="15.5" stroke="#333" stroke-width="1.2" />
<line x1="701.5" y1="4" x2="701.5" y2="15.5" stroke="#333" stroke-width="1.2" />
<line x1="689.5" y1="13.5" x2="701.5" y2="13.5" stroke="#333" stroke-width="1" />
<polyline points="698.5,11.7 701,13.5 698.5,15.3" fill="none" stroke="#333" stroke-width="1" />
<rect x="688.0" y="0.8" width="3" height="3" fill="none" stroke="#333" stroke-width="0.9" transform="rotate(45 689.5 2.3)"/>
<rect x="700.0" y="0.8" width="3" height="3" fill="none" stroke="#333" stroke-width="0.9" transform="rotate(45 701.5 2.3)"/>
<text x="708.7" y="13.5" font-size="13.4" fill="#333" textLength="5.3" lengthAdjust="spacingAndGlyphs">1</text>
<path d="M740.7 5.2 L749.8 5.2 L745.25 9.749999999999954 Z" fill="#222"/>
<rect x="754.5" y="0" width="49.5" height="20.3" fill="#ececec"/>
<rect x="804" y="0" width="70.60000000000002" height="20.3" fill="#fff"/>
<circle cx="766.8" cy="6.7" r="5.1" fill="none" stroke="#333" stroke-width="1.2"/>
<line x1="770.6" y1="10.6" x2="775.3" y2="14.8" stroke="#333" stroke-width="2" />
<rect x="765.5" y="2.5" width="9" height="7" fill="none" stroke="#333" stroke-width="0.9" stroke-dasharray="1.3 1.2"/>
<path d="M788.3 5.2 L797.8 5.2 L793.05 9.95 Z" fill="#222"/>
<circle cx="811.7" cy="6.4" r="5" fill="#fff" stroke="#333" stroke-width="1.2"/>
<line x1="815.4" y1="10.2" x2="820.3" y2="14.7" stroke="#333" stroke-width="2" />
<line x1="809.3" y1="5.2" x2="814.1" y2="5.2" stroke="#333" stroke-width="1.1" />
<line x1="811.7" y1="2.9" x2="811.7" y2="7.5" stroke="#333" stroke-width="1.1" />
<line x1="809.6" y1="8.9" x2="813.8" y2="8.9" stroke="#333" stroke-width="1" />
<text x="827.2" y="13.5" font-size="13.4" fill="#333" textLength="23.8" lengthAdjust="spacingAndGlyphs">0.379</text>
<rect x="849.8" y="1" width="6" height="17" fill="#fff"/>
<path d="M858.8 5.2 L869 5.2 L863.9 10.300000000000022 Z" fill="#222"/>
<rect x="874.6" y="0" width="13.199999999999932" height="20.3" fill="#e0e0e0"/>
<text x="877.5" y="13.5" font-size="13.4" fill="#333" textLength="7.8" lengthAdjust="spacingAndGlyphs">X</text>
<rect x="887.8" y="0" width="45.200000000000045" height="20.3" fill="#fff"/>
<text x="890.8" y="13.5" font-size="13.4" fill="#333" textLength="41.2" lengthAdjust="spacingAndGlyphs">931.804:</text>
<rect x="930.6" y="1" width="2.4" height="17" fill="#fff"/>
<rect x="933" y="0" width="13" height="20.3" fill="#e0e0e0"/>
<text x="935.8" y="13.5" font-size="13.4" fill="#333" textLength="7.7" lengthAdjust="spacingAndGlyphs">Y</text>
<rect x="946" y="0" width="45" height="20.3" fill="#fff"/>
<text x="948.6" y="13.5" font-size="13.4" fill="#333" textLength="40.9" lengthAdjust="spacingAndGlyphs">366.466!</text>
<rect x="988.4" y="1" width="2.6" height="17" fill="#fff"/>
<rect x="997.3" y="0" width="15.3" height="1.6" fill="#222"/>
<line x1="998.6" y1="1.5" x2="998.6" y2="9.5" stroke="#333" stroke-width="0.9" />
<polyline points="997.2,7.8 998.6,9.8 1000,7.8" fill="none" stroke="#333" stroke-width="0.8" />
<rect x="997.4" y="11.2" width="6" height="4" fill="none" stroke="#333" stroke-width="1" />
<line x1="997.4" y1="13.2" x2="1003.4" y2="13.2" stroke="#333" stroke-width="0.8" />
<line x1="1000.4" y1="11.2" x2="1000.4" y2="15.2" stroke="#333" stroke-width="0.8" />
<rect x="1005.6" y="1.4" width="5" height="14" fill="#6a6a6a"/>
<line x1="1006" y1="2.5" x2="1010.2" y2="4.6" stroke="#e8e8e8" stroke-width="0.6" />
<line x1="1010.2" y1="2.5" x2="1006" y2="4.6" stroke="#e8e8e8" stroke-width="0.6" />
<line x1="1006" y1="5.2" x2="1010.2" y2="7.3" stroke="#e8e8e8" stroke-width="0.6" />
<line x1="1010.2" y1="5.2" x2="1006" y2="7.3" stroke="#e8e8e8" stroke-width="0.6" />
<line x1="1006" y1="7.9" x2="1010.2" y2="10.0" stroke="#e8e8e8" stroke-width="0.6" />
<line x1="1010.2" y1="7.9" x2="1006" y2="10.0" stroke="#e8e8e8" stroke-width="0.6" />
<line x1="1006" y1="10.600000000000001" x2="1010.2" y2="12.700000000000001" stroke="#e8e8e8" stroke-width="0.6" />
<line x1="1010.2" y1="10.600000000000001" x2="1006" y2="12.700000000000001" stroke="#e8e8e8" stroke-width="0.6" />
<line x1="1006" y1="13.3" x2="1010.2" y2="15.4" stroke="#e8e8e8" stroke-width="0.6" />
<line x1="1010.2" y1="13.3" x2="1006" y2="15.4" stroke="#e8e8e8" stroke-width="0.6" />
<path d="M1025.6 15.4 L1027 11.2 L1033.6 5.2 L1036.2 7.8 L1029.8 14 Z" fill="#f7f7f7" stroke="#333" stroke-width="1.1" />
<path d="M1032.8 5.6 L1036.4 2 A2.4 2.4 0 0 1 1040 5.2 L1036.8 9 Z" fill="#333"/>
<line x1="1031.6" y1="4.6" x2="1037.6" y2="10.2" stroke="#333" stroke-width="1.8" />
</svg>
</body></html>
